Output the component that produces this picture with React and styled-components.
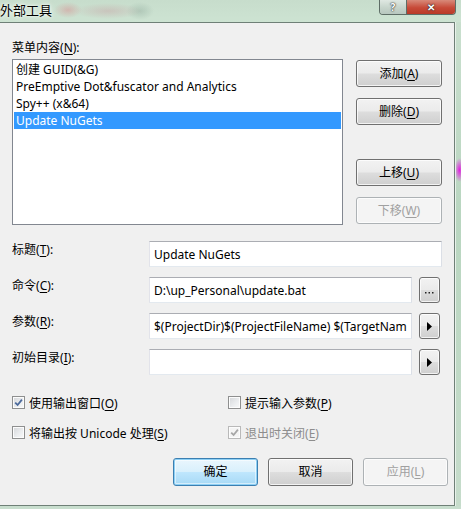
import React from 'react'
import styled, { createGlobalStyle, css } from 'styled-components'

/******************************************************************************/
// Data
/******************************************************************************/

const TOOLS = [
  '创建 GUID(&G)',
  'PreEmptive Dot&fuscator and Analytics',
  'Spy++ (x&64)',
  'Update NuGets'
]

const SELECTED = 3

/******************************************************************************/
// Global
/******************************************************************************/

const GlobalStyle = createGlobalStyle`
  html, body {
    margin: 0;
    padding: 0;
    background: #cde2d2;
  }

  body {
    font-family: "Noto Sans", "Noto Sans CJK SC", sans-serif;
    font-size: 12px;
    color: #000;
  }
`

/******************************************************************************/
// Window frame
/******************************************************************************/

const Window = styled.div`
  width: 461px;
  height: 509px;
  display: flex;
  flex-direction: column;
  overflow: hidden;
  background: linear-gradient(90deg, #c6dccb 0%, #cfe4d4 50%, #c9e0cf 100%);
`

const TitleBar = styled.div`
  height: 22px;
  flex: none;
  display: flex;
  align-items: flex-start;
  padding-right: 5px;
  background:
    radial-gradient(ellipse 14px 8px at 68px 10px, rgba(214, 150, 150, 0.55), transparent),
    radial-gradient(ellipse 34px 8px at 108px 11px, rgba(200, 170, 170, 0.5), transparent),
    radial-gradient(ellipse 14px 9px at 140px 11px, rgba(160, 185, 170, 0.6), transparent),
    linear-gradient(180deg, #c7ddcc 0%, #cde3d2 100%);
`

const Caption = styled.div`
  font-family: "Noto Sans CJK SC", sans-serif;
  font-size: 13px;
  line-height: 20px;
  text-shadow: 0 0 6px #fff, 0 0 3px #fff;
`

const CaptionButtons = styled.div`
  margin-left: auto;
  display: flex;
  height: 14px;
  border: 1px solid #5e6d66;
  border-top: none;
  border-radius: 0 0 4px 4px;
  overflow: hidden;
`

const CaptionButton = styled.div`
  width: ${p => p.$w}px;
  display: flex;
  align-items: center;
  justify-content: center;
  color: #fff;
  font-weight: bold;
  font-size: 10px;
  line-height: 12px;
  text-shadow: 0 0 2px #333, 0 0 1px #000;
  ${p => p.$close ? css`
    background: linear-gradient(180deg, #d88a7a 0%, #c74a38 55%, #b93a28 100%);
  ` : css`
    background: linear-gradient(180deg, #dfe8e2 0%, #c6d4cb 55%, #b8c7bf 100%);
    border-right: 1px solid #5e6d66;
  `}
`

const Body = styled.div`
  flex: 1;
  display: flex;
  min-height: 0;
`

const SideFrame = styled.div`
  width: 5px;
  flex: none;
  border-left: 1px solid #e8f1ea;
  background:
    radial-gradient(ellipse 5px 12px at 70% 148px, #e21ee2, transparent),
    linear-gradient(180deg, #c9dfce 0%, #b9d6c0 40%, #c6dccb 100%);
`

const BottomFrame = styled.div`
  height: 3px;
  flex: none;
  background: #c8dece;
`

/******************************************************************************/
// Client
/******************************************************************************/

const Client = styled.div`
  flex: 1;
  display: flex;
  flex-direction: column;
  background: #f0f0f0;
  border: 1px solid #6f8077;
  border-left: none;
  padding: 0 12px;
`

const Key = styled.span`
  text-decoration: underline;
  text-underline-offset: 2px;
`

const GroupLabel = styled.div`
  line-height: 16px;
  margin: 17px 0 3px;
`

const TopRow = styled.div`
  display: flex;
  gap: 13px;
  height: 166px;
`

const ListBox = styled.div`
  width: 331px;
  box-sizing: border-box;
  background: #fff;
  border: 1px solid #828790;
  padding: 1px;
`

const ListItem = styled.div`
  height: 17px;
  line-height: 17px;
  padding-left: 2px;
  white-space: nowrap;
  ${p => p.$selected && css`
    background: #3399ff;
    color: #fff;
  `}
`

const SideButtons = styled.div`
  display: flex;
  flex-direction: column;
  justify-content: space-between;
  padding: 1px 0;
`

const ButtonPair = styled.div`
  display: flex;
  flex-direction: column;
  gap: 11px;
`

const Button = styled.div`
  box-sizing: border-box;
  width: ${p => p.$w || 86}px;
  height: ${p => p.$h || 27}px;
  display: flex;
  align-items: center;
  justify-content: center;
  border: 1px solid #707070;
  border-radius: 3px;
  background: linear-gradient(180deg, #f2f2f2 0%, #ebebeb 48%, #dddddd 52%, #cfcfcf 100%);
  box-shadow: inset 0 0 0 1px rgba(255, 255, 255, 0.75);
  line-height: 1;

  ${p => p.$default && css`
    border-color: #3c7fb1;
    background: linear-gradient(180deg, #eaf6fd 0%, #d9f0fc 48%, #bee6fd 52%, #a7d9f5 100%);
    box-shadow: inset 0 0 0 1px #8dd0f5, inset 0 0 0 2px rgba(255, 255, 255, 0.5);
  `}

  ${p => p.$disabled && css`
    border-color: #adb2b5;
    background: #f4f4f4;
    box-shadow: inset 0 0 0 1px #fcfcfc;
    color: #a0a0a0;
  `}
`

/******************************************************************************/
// Form
/******************************************************************************/

const Form = styled.div`
  display: grid;
  grid-template-columns: 130px 1fr 23px;
  grid-auto-rows: 26px;
  column-gap: 7px;
  row-gap: 10px;
  margin-top: 16px;
`

const FieldLabel = styled.div`
  line-height: 16px;
  padding-top: 1px;
`

const TextBox = styled.input`
  box-sizing: border-box;
  width: 100%;
  height: 26px;
  margin: 0;
  padding: 0 4px;
  border: 1px solid;
  border-color: #abadb3 #dbdfe6 #e3e9ef #e2e3ea;
  background: #fff;
  font: inherit;
  font-size: 12px;
  color: #000;
  outline: none;
  grid-column: ${p => p.$wide ? 'span 2' : 'auto'};
`

const Glyph = styled.svg`
  display: block;
`

/******************************************************************************/
// Checks
/******************************************************************************/

const Checks = styled.div`
  display: grid;
  grid-template-columns: 216px 1fr;
  grid-auto-rows: 17px;
  row-gap: 13px;
  margin-top: 19px;
`

const Check = styled.div`
  display: flex;
  align-items: center;
  gap: 4px;
  color: ${p => p.$disabled ? '#8d8d8d' : '#000'};
`

const Box = styled.span`
  box-sizing: border-box;
  width: 13px;
  height: 13px;
  flex: none;
  display: flex;
  align-items: center;
  justify-content: center;
  border: 1px solid ${p => p.$disabled ? '#b9b9b9' : '#8e8f8f'};
  background: ${p => p.$disabled
    ? '#f4f4f4'
    : 'linear-gradient(135deg, #d4d6d9 0%, #eceef0 60%, #f9f9f9 100%)'};
  box-shadow: inset 0 0 0 1px #fcfcfc;
`

const Footer = styled.div`
  display: flex;
  justify-content: flex-end;
  gap: 10px;
  margin: 17px -6px 0 0;
`

/******************************************************************************/
// Parts
/******************************************************************************/

const Label = ({ text, k, colon }) =>
  <>{text}(<Key>{k}</Key>){colon ? ':' : ''}</>

const CheckBox = ({ checked, disabled, children }) =>
  <Check $disabled={disabled}>
    <Box $disabled={disabled}>
      {checked && <Glyph width='9' height='9' viewBox='0 0 9 9'>
        <path d='M1.2 4.6 L3.6 7 L7.9 1.6' fill='none'
          stroke={disabled ? '#a6a6a6' : '#4c6a9c'} strokeWidth='1.8' />
      </Glyph>}
    </Box>
    <span>{children}</span>
  </Check>

const Ellipsis = () =>
  <Glyph width='9' height='4' viewBox='0 0 9 4' style={{ marginTop: 6 }}>
    <rect x='0' y='1' width='1.5' height='1.5' fill='#222' />
    <rect x='3.5' y='1' width='1.5' height='1.5' fill='#222' />
    <rect x='7' y='1' width='1.5' height='1.5' fill='#222' />
  </Glyph>

const Arrow = () =>
  <Glyph width='5' height='9' viewBox='0 0 5 9'>
    <path d='M0 0 L5 4.5 L0 9 Z' fill='#000' />
  </Glyph>

/******************************************************************************/
// Main Component
/******************************************************************************/

const App = () =>
  <>
    <GlobalStyle />
    <Window>

      <TitleBar>
        <Caption>外部工具</Caption>
        <CaptionButtons>
          <CaptionButton $w={26}>?</CaptionButton>
          <CaptionButton $w={48} $close>✕</CaptionButton>
        </CaptionButtons>
      </TitleBar>

      <Body>
        <Client>

          <GroupLabel><Label text='菜单内容' k='N' colon /></GroupLabel>

          <TopRow>
            <ListBox>
              {TOOLS.map((tool, i) =>
                <ListItem key={tool} $selected={i === SELECTED}>{tool}</ListItem>)}
            </ListBox>

            <SideButtons>
              <ButtonPair>
                <Button><Label text='添加' k='A' /></Button>
                <Button><Label text='删除' k='D' /></Button>
              </ButtonPair>
              <ButtonPair>
                <Button><Label text='上移' k='U' /></Button>
                <Button $disabled><Label text='下移' k='W' /></Button>
              </ButtonPair>
            </SideButtons>
          </TopRow>

          <Form>
            <FieldLabel><Label text='标题' k='T' colon /></FieldLabel>
            <TextBox $wide readOnly defaultValue='Update NuGets' />

            <FieldLabel><Label text='命令' k='C' colon /></FieldLabel>
            <TextBox readOnly defaultValue='D:\up_Personal\update.bat' />
            <Button $w={21} $h={26}><Ellipsis /></Button>

            <FieldLabel><Label text='参数' k='R' colon /></FieldLabel>
            <TextBox readOnly
              defaultValue='$(ProjectDir)$(ProjectFileName) $(TargetName)' />
            <Button $w={21} $h={26}><Arrow /></Button>

            <FieldLabel><Label text='初始目录' k='I' colon /></FieldLabel>
            <TextBox readOnly defaultValue='' />
            <Button $w={21} $h={26}><Arrow /></Button>
          </Form>

          <Checks>
            <CheckBox checked><Label text='使用输出窗口' k='O' /></CheckBox>
            <CheckBox><Label text='提示输入参数' k='P' /></CheckBox>
            <CheckBox><Label text='将输出按 Unicode 处理' k='S' /></CheckBox>
            <CheckBox checked disabled><Label text='退出时关闭' k='E' /></CheckBox>
          </Checks>

          <Footer>
            <Button $w={85} $h={28} $default>确定</Button>
            <Button $w={85} $h={28}>取消</Button>
            <Button $w={85} $h={28} $disabled><Label text='应用' k='L' /></Button>
          </Footer>

        </Client>
        <SideFrame />
      </Body>

      <BottomFrame />
    </Window>
  </>

/******************************************************************************/
// Exports
/******************************************************************************/

export default App
